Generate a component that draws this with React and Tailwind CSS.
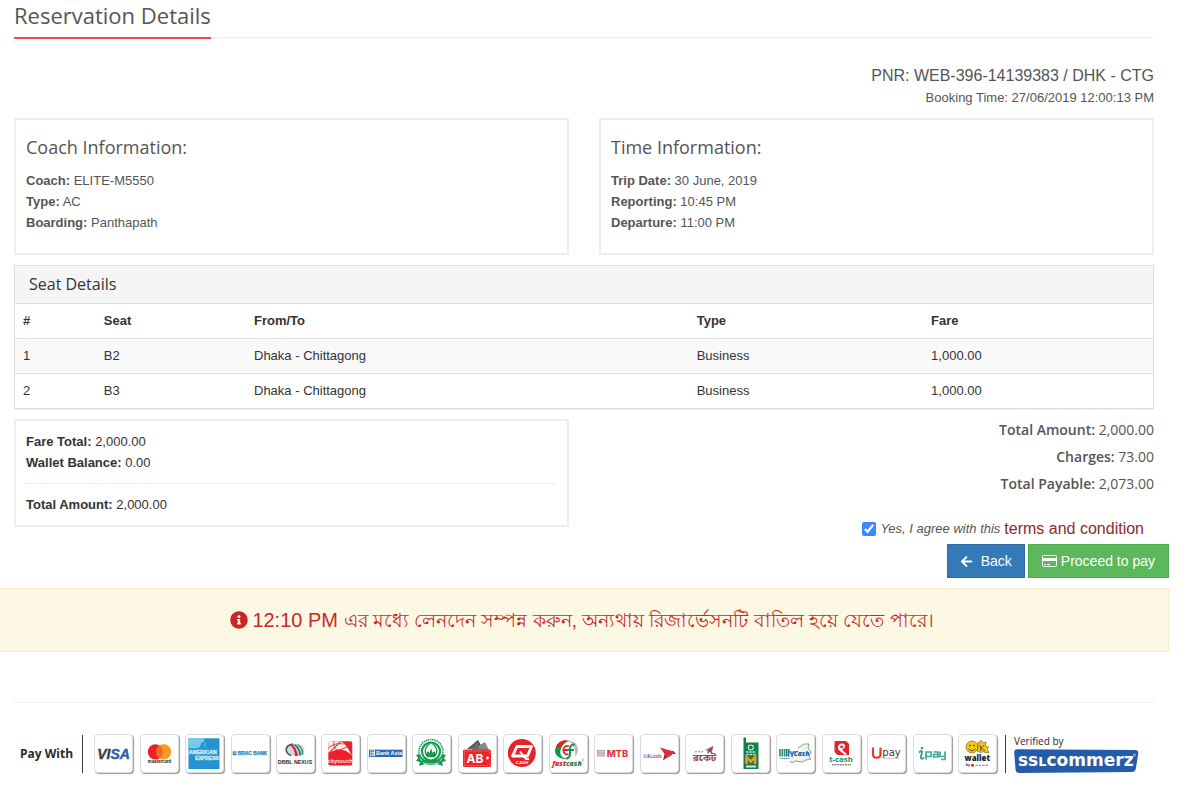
import React from "react";
import { FaArrowLeft, FaInfoCircle } from "react-icons/fa";

const seats = [
  { no: 1, seat: "B2", route: "Dhaka - Chittagong", type: "Business", fare: "1,000.00" },
  { no: 2, seat: "B3", route: "Dhaka - Chittagong", type: "Business", fare: "1,000.00" },
];

const SANS = "Liberation Sans, sans-serif";
const INTER = "Inter, sans-serif";
const OPEN = "Open Sans, sans-serif";
const DEJA = "DejaVu Sans, sans-serif";

function T({ x, y, s, f = SANS, w = 700, c = "#222", a = "middle", children, ...rest }) {
  return (
    <text x={x} y={y} fontSize={s} fontFamily={f} fontWeight={w} fill={c} textAnchor={a} {...rest}>
      {children}
    </text>
  );
}

const logos = [
  {
    name: "Visa",
    art: (
      <T x="19.5" y="24.5" s="14" c="#3d3d47" fontStyle="italic" strokeWidth=".4" stroke="#3d3d47">
        VI<tspan fill="#2a5caa" stroke="#2a5caa">SA</tspan>
      </T>
    ),
  },
  {
    name: "Mastercard",
    art: (
      <>
        <circle cx="15.4" cy="17.8" r="7.6" fill="#ec2127" />
        <circle cx="23.6" cy="17.8" r="7.6" fill="#f79a1f" />
        <path d="M19.5 11.4a7.6 7.6 0 0 1 0 12.8a7.6 7.6 0 0 1 0-12.8z" fill="#f26722" />
        <T x="19.5" y="29" s="4.2" f={INTER}>mastercard</T>
      </>
    ),
  },
  {
    name: "American Express",
    art: (
      <>
        <rect x="3.5" y="4.3" width="31" height="30.7" fill="#2393d1" />
        <path d="M3.5 4.3h17l-4 5-2 4-3 1h-8z" fill="#7cc8ec" />
        <path d="M18 7l3 2.500-2 2 2 2" fill="none" stroke="#7cc8ec" />
        <T x="17.800" y="19.800" s="5.200" c="#e3f3fb" stroke="#c2e4f5" strokeWidth=".4">AMERICAN</T>
        <T x="22" y="25.600" s="5" c="#e3f3fb" stroke="#c2e4f5" strokeWidth=".4">EXPRESS</T>
      </>
    ),
  },
  {
    name: "BRAC Bank",
    art: (
      <>
        <rect x="1.8" y="17.4" width="3.6" height="3.8" fill="#1c7fc4" />
        <rect x="2.8" y="18" width="2" height="2" fill="#f5a623" />
        <T x="21.500" y="21.200" s="4.900" c="#1b82c8" stroke="#1b82c8" strokeWidth=".25">BRAC BANK</T>
      </>
    ),
  },
  {
    name: "DBBL Nexus",
    art: (
      <>
        <ellipse cx="18.500" cy="16" rx="10" ry="6.200" fill="#d5d8da" />
        <path d="M17 10c-8 1-9 8-2 11.500" fill="none" stroke="#4a4f55" strokeWidth="1.400" />
        <path d="M13 10.500h3c4 3 5 7 6 11.500h-3c0-5-2-9-6-11.500z" fill="#d8232a" />
        <path d="M17 10.500h2.500c4 3 5 7 6 11h-2.500c0-5-2-8-6-11z" fill="#1f6fbd" />
        <path d="M20.500 10.500h2c3 2 5 6 5 9.500l-1.500 1c0-5-2-8-5.500-10.500z" fill="#2f9b57" />
        <T x="19" y="29.500" s="5.300" c="#2b2b2b">DBBL NEXUS</T>
      </>
    ),
  },
  {
    name: "citytouch",
    art: (
      <>
        <rect x="7.300" y="7.300" width="24" height="24.300" rx="2" fill="#ed2228" />
        <path d="M7.300 20.500L20 7.300c3 2 6 5 8.500 10 1 2 1.500 3 2.800 5-6-8-17-9-24-2z" fill="#fdeeee" />
        <path d="M7.300 7.300H19L7.300 19z" fill="#fdeeee" />
        <path d="M7.300 14c5-4 9-5 15-4M13 7.300c-1 4 0 7 4 9M20 7.300L7.300 20M26 13l-8 3" fill="none" stroke="#ed2228" strokeWidth=".9" />
        <T x="19.300" y="29" s="5.600" f={OPEN} w="600" c="#ffffff">citytouch</T>
      </>
    ),
  },
  {
    name: "Bank Asia",
    art: (
      <>
        <rect x="2" y="15.700" width="33.500" height="7.300" fill="#2b69b1" />
        <rect x="3" y="16.500" width="5" height="5.600" fill="#ffffff" />
        <path d="M4 17.500h3M4 19.300h3M4 21h3M4 17v4.500" stroke="#2b69b1" strokeWidth=".8" />
        <T x="22" y="21.400" s="5.400" c="#ffffff">Bank Asia</T>
      </>
    ),
  },
  {
    name: "Islami Bank",
    art: (
      <>
        <circle cx="19" cy="17.500" r="12" fill="none" stroke="#159a4d" strokeWidth="1.500" strokeDasharray="1.500 .7" />
        <circle cx="19" cy="17.500" r="9" fill="none" stroke="#159a4d" strokeWidth="2.200" />
        <path d="M19 8.500c-7 5-7 10-3.500 14h7c3.500-4 3.500-9-3.500-14z" fill="#ffffff" stroke="#159a4d" strokeWidth="1.300" />
        <path d="M14.500 22v-3l1.500-2 1.500 2 1.500-5 1.500 5 1.500-2 1.500 2v3z" fill="#159a4d" />
        <path d="M4 21l4-1c2 5 6 7 11 7s9-2 11-7l4 1-2 3 2 3-4 1 1 4-6-2c-4 1.500-8 1.500-12 0l-6 2 1-4-4-1 2-3z" fill="#159a4d" />
        <path d="M11 28.500c4 2 12 2 16 0M8 24l2 3M30 24l-2 3" fill="none" stroke="#c8ead6" strokeWidth=".9" />
      </>
    ),
  },
  {
    name: "AB Bank",
    art: (
      <>
        <path d="M9 15L20 6l5 9z" fill="#4c4c4e" />
        <path d="M13 16l14-8 4 8z" fill="#89898b" />
        <path d="M11 15l9-7 1 7z" fill="#6b6b6d" />
        <rect x="5" y="15.500" width="28" height="17.500" rx="1.500" fill="#ec2429" />
        <rect x="6.300" y="17" width="25.400" height="14.500" fill="none" stroke="#ffffff" strokeWidth=".4" strokeDasharray="1.200 1" />
        <T x="17" y="29" s="12" f={INTER} c="#ffffff">AB</T>
        <rect x="27" y="20.500" width="6" height="7" rx="1" fill="#ec2429" />
        <circle cx="29.500" cy="24" r="1.400" fill="#ffffff" />
      </>
    ),
  },
  {
    name: "Q-Cash",
    art: (
      <>
        <circle cx="18.800" cy="19" r="14" fill="#e8212a" />
        <path d="M14 12.500h14.500l-4 9.500H9.500z" fill="none" stroke="#ffffff" strokeWidth="2.800" strokeLinejoin="round" />
        <path d="M17 17.500l6 7.500h3" fill="none" stroke="#ffffff" strokeWidth="2" />
        <T x="19" y="29.500" s="4.400" c="#ffffff" fontStyle="italic">CASH</T>
      </>
    ),
  },
  {
    name: "FastCash",
    art: (
      <>
        <path d="M19 7.300c-12-1-17 11-9 16 4 2.500 8 1.500 8 1.500-6-1-8-5-6-10 1.500-4 4-6 7-7.500z" fill="#17944b" />
        <path d="M20 7c8 0 12 9 6 16 1-8-1-12-6-16z" fill="#b7b7b9" />
        <path d="M7 13c2-6 8-8 14-6-5 0-8 3-9 6z" fill="#e2231a" />
        <path d="M20 12c-4-1-6 2-5.500 5s3 4 5 3M15 16h4" fill="none" stroke="#e2231a" strokeWidth="1.800" />
        <path d="M26 10.500c-4-.5-5 2-5 5v5c0 2-2 4-4 4M19 16h6" fill="none" stroke="#17944b" strokeWidth="2" />
        <T x="18" y="32" s="7" f={OPEN} w="800" c="#d4232b" fontStyle="italic">
          fast<tspan fill="#17844b">cash</tspan>
        </T>
        <circle cx="34" cy="26" r="1.100" fill="none" stroke="#777" strokeWidth=".4" />
      </>
    ),
  },
  {
    name: "MTB",
    art: (
      <>
        <rect x="3.500" y="16.500" width="7" height="5.500" fill="#f3e3e3" stroke="#8a7f80" strokeWidth=".6" />
        <path d="M5 17v5M7 17v5M9 17v5M3.500 19.300h7" stroke="#b7686a" strokeWidth=".5" />
        <T x="23.500" y="22.500" s="9.500" f={INTER} w="800" c="#e23a35">MTB</T>
      </>
    ),
  },
  {
    name: "bKash",
    art: (
      <>
        <T x="12.500" y="23.800" s="7" w="400" c="#3c3c3c" f="Liberation Serif, serif">
          <tspan fill="#d8232e">b</tspan>Kash
        </T>
        <path d="M20 13.500l10 3-3 7z" fill="#d9303c" />
        <path d="M22 13.500l5 10-4 3 2-8z" fill="#a9202c" />
        <path d="M26 24.500l3-8 5 .5-2 4z" fill="#d9303c" />
        <path d="M33 17l3 3h-3z" fill="#a9202c" />
      </>
    ),
  },
  {
    name: "Rocket",
    art: (
      <>
        <path d="M20 16l8.500-4-2 7.500-2-2.500z" fill="#a35573" />
        <path d="M28.500 12l-6 5.500v2.500l2-2z" fill="#8c3a5c" />
        <T x="19.500" y="26.500" s="10" f="Noto Sans Bengali, sans-serif" c="#94476a">রকেট</T>
        <path d="M10 17.800h9" stroke="#a35573" strokeWidth=".9" strokeDasharray="2 1" />
      </>
    ),
  },
  {
    name: "Islami Bank mCash",
    art: (
      <>
        <path d="M12.500 3.500h2.500v5h12.500v26.500h-15z" fill="#12804a" />
        <circle cx="19.800" cy="13.500" r="2.500" fill="none" stroke="#d8efe2" strokeWidth="1.100" />
        <path d="M15 18h10M15.500 20.500h9" stroke="#b9dfca" strokeWidth="1.300" strokeDasharray="2.500 .7" />
        <path d="M15.500 30v-7l4.300 4.500 4.300-4.500v7" fill="none" stroke="#f59b23" strokeWidth="2.500" />
        <rect x="15" y="31.500" width="10" height="2" fill="#cfe9da" />
      </>
    ),
  },
  {
    name: "MYCash",
    art: (
      <>
        <path d="M22 14l6-4h5l-1 4 3 4-2 4 2 3-5 1-4 2-7-1-3 2-2-2" fill="#eef7ef" stroke="#4c9c63" strokeWidth=".8" />
        <path d="M4 22.500v-7.500M6.300 22.500v-7.500M8.600 22.500v-7.500" stroke="#2f9b57" strokeWidth="1.700" />
        <path d="M10.700 22.500v-7.500M12.700 22.500v-7.500" stroke="#2b62ad" strokeWidth="1.500" />
        <T x="16" y="22.500" s="9.500" f={OPEN} w="800" c="#1f7fbf">Y</T>
        <T x="25.500" y="22.300" s="6.600" f={OPEN} w="800" c="#2459a6" fontStyle="italic">Cash</T>
        <path d="M4 24.500h10" stroke="#2b62ad" strokeWidth=".8" strokeDasharray="1.500 .5" />
      </>
    ),
  },
  {
    name: "t-cash",
    art: (
      <>
        <path d="M13 7h11l3 3v11H15.500l-3-3V9z" fill="#e6232b" />
        <path d="M16 12c2-4 8-3 7 1l-3 3 5 4-2 1-5-4c-2-1-2-3-2-5z" fill="#ffffff" />
        <path d="M18 12.500c1-2 4-1 3 1l-2 1z" fill="#e6232b" />
        <T x="19" y="28" s="7.800" f={OPEN} w="700" c="#159052">t-cash</T>
        <path d="M10 30.800h19" stroke="#555" strokeWidth="1" strokeDasharray="2 .6" />
      </>
    ),
  },
  {
    name: "Upay",
    art: (
      <>
        <path d="M6 13.500v6.500c0 5 7.500 5 7.500 0v-6.500" fill="none" stroke="#e6392f" strokeWidth="2.200" />
        <T x="24.500" y="21.500" s="10" f={DEJA} w="400" c="#3a3a3c">pay</T>
        <path d="M16 24.300h16" stroke="#e8a39c" strokeWidth=".9" strokeDasharray="1.800 .6" />
      </>
    ),
  },
  {
    name: "iPay",
    art: (
      <>
        <circle cx="9" cy="14" r="1.300" fill="#2f9f93" />
        <path d="M6 18.500c2-2 3.500-2 3 0l-1.200 4.500c0 2 1.500 2.500 3 .5" fill="none" stroke="#2f9f93" strokeWidth="1.800" />
        <path d="M13 25.500v-7.500h5v4.500h-4.500M20.500 18h4.500v5h-4.500v-2.500h4.500M27 17.500v5h5M32 17.500v8h-4" fill="none" stroke="#3fa89b" strokeWidth="1.700" />
      </>
    ),
  },
  {
    name: "OK Wallet",
    art: (
      <>
        <circle cx="14" cy="13" r="6" fill="#f7c619" stroke="#4a3a10" strokeWidth=".5" />
        <circle cx="12" cy="11.500" r=".8" fill="#222" />
        <circle cx="16" cy="11.500" r=".8" fill="#222" />
        <path d="M10.500 14.500c2 3 5 3 7 0" fill="none" stroke="#222" strokeWidth=".8" />
        <path d="M20 8l1.500 1 1.500-3 2 3 3-1-1 4 3.500 1-1.500 2 2 3.500h-4l-2-1-1.500 1-4-1z" fill="#f7c619" stroke="#4a3a10" strokeWidth=".5" />
        <path d="M22 11l1 6M26 11.500l-3 2.500 4 3" fill="none" stroke="#4a3a10" strokeWidth=".8" />
        <T x="19.300" y="27" s="7.800" f={OPEN} w="800" c="#1f1f21">wallet</T>
        <T x="10" y="32.300" s="3.800">by</T>
        <circle cx="14.500" cy="31.300" r="1.500" fill="#e2232b" />
        <path d="M17.500 31.300h13" stroke="#999" strokeWidth="1.200" strokeDasharray="2.500 .8" />
      </>
    ),
  },
];

function Info({ label, value }) {
  return (
    <p className="text-[13px] leading-[21px]">
      <strong>{label}:</strong> {value}
    </p>
  );
}

function InfoCard({ title, rows }) {
  return (
    <section className="border-2 border-[#eeeeee] px-2.5 pt-[17px] pb-5">
      <h2 className="mb-[13px] font-['Open_Sans',sans-serif] text-lg leading-5">{title}</h2>
      {rows.map(([label, value]) => (
        <Info key={label} label={label} value={value} />
      ))}
    </section>
  );
}

function CreditCardIcon() {
  return (
    <svg viewBox="0 0 15 12" className="h-3 w-[15px]" aria-hidden="true">
      <rect x=".5" y=".5" width="14" height="11" rx="1" fill="none" stroke="currentColor" />
      <path d="M.5 3h14v3H.5z" fill="currentColor" />
      <path d="M2 9.500h2M5 9.500h3" stroke="currentColor" />
    </svg>
  );
}

export default function App() {
  return (
    <main className="bg-white pr-[26px] pb-7 pl-3.5 font-['Liberation_Sans',Arial,sans-serif] text-[13px] text-[#555555]">
      <header className="flex border-b border-dotted border-[#e0e0e0]">
        <h1 className="-mb-0.5 border-b-2 border-[#eb4d40] pb-[7px] font-['Open_Sans',sans-serif] text-[22px] leading-[30px]">
          Reservation Details
        </h1>
      </header>

      <div className="mt-[26px] mb-2.5 text-right">
        <p className="text-base leading-6">PNR: WEB-396-14139383 / DHK - CTG</p>
        <p className="text-[13px] leading-5">Booking Time: 27/06/2019 12:00:13 PM</p>
      </div>

      <div className="grid grid-cols-2 gap-[30px]">
        <InfoCard
          title="Coach Information:"
          rows={[
            ["Coach", "ELITE-M5550"],
            ["Type", "AC"],
            ["Boarding", "Panthapath"],
          ]}
        />
        <InfoCard
          title="Time Information:"
          rows={[
            ["Trip Date", "30 June, 2019"],
            ["Reporting", "10:45 PM"],
            ["Departure", "11:00 PM"],
          ]}
        />
      </div>

      <section className="mt-2.5 border border-[#dddddd] text-[#333333] shadow-[0_1px_1px_rgba(0,0,0,0.05)]">
        <h2 className="border-b border-[#dddddd] bg-[#f5f5f5] px-3.5 py-2 font-['Open_Sans',sans-serif] text-base leading-[21px]">
          Seat Details
        </h2>
        <table className="w-full table-fixed border-separate border-spacing-0 text-left text-[13px] leading-[18px]">
          <colgroup>
            <col className="w-[7.1%]" />
            <col className="w-[13.2%]" />
            <col className="w-[38.9%]" />
            <col className="w-[20.6%]" />
            <col />
          </colgroup>
          <thead>
            <tr>
              {["#", "Seat", "From/To", "Type", "Fare"].map((h) => (
                <th key={h} scope="col" className="p-2 font-bold">
                  {h}
                </th>
              ))}
            </tr>
          </thead>
          <tbody>
            {seats.map((s) => (
              <tr key={s.no} className="odd:bg-[#f9f9f9]">
                {[s.no, s.seat, s.route, s.type, s.fare].map((v, i) => (
                  <td key={i} className="border-t border-[#dddddd] p-2">
                    {v}
                  </td>
                ))}
              </tr>
            ))}
          </tbody>
        </table>
      </section>

      <div className="mt-[7px] grid grid-cols-2 items-start gap-[30px]">
        <section className="mt-[3px] border-2 border-[#eeeeee] p-2.5 text-[#333333]">
          <Info label="Fare Total" value="2,000.00" />
          <Info label="Wallet Balance" value="0.00" />
          <hr className="my-2.5 border-[#eeeeee]" />
          <Info label="Total Amount" value="2,000.00" />
        </section>
        <div className="text-right">
          <div className="font-['Open_Sans',sans-serif] text-sm leading-[27px]">
            <p><span className="font-semibold">Total Amount:</span> 2,000.00</p>
            <p><span className="font-semibold">Charges:</span> 73.00</p>
            <p><span className="font-semibold">Total Payable:</span> 2,073.00</p>
          </div>
          <div className="mt-[22px] flex items-center justify-end pr-2.5 leading-5">
            <input id="agree" type="checkbox" defaultChecked className="mr-1 h-3.5 w-3.5 accent-[#3b88fd]" />
            <label htmlFor="agree" className="mr-1 italic">Yes, I agree with this</label>
            <a href="#terms" className="text-base leading-5 text-[#8f2a28]">terms and condition</a>
          </div>
        </div>
      </div>

      <div className="-mr-[15px] mt-[5px] flex justify-end gap-[3px] text-sm leading-5 text-white">
        <button type="button" className="flex items-center gap-2 border border-[#2e6da4] bg-[#337ab7] px-3 py-1.5">
          <FaArrowLeft className="h-[13px] w-[13px]" aria-hidden="true" />
          Back
        </button>
        <button type="button" className="flex items-center gap-1 border border-[#4cae4c] bg-[#5cb85c] px-[13px] py-1.5">
          <CreditCardIcon />
          Proceed to pay
        </button>
      </div>

      <p
        role="alert"
        className="-mr-[15px] -ml-3.5 mt-2.5 flex items-center justify-center gap-1 border border-l-0 border-[#faebcc] bg-[#fcf8e3] py-[17px] pr-5 pl-4 text-xl leading-7 text-[#c9282a]"
      >
        <FaInfoCircle className="h-[18px] w-[18px] shrink-0" aria-hidden="true" />
        <span>
          12:10 PM{" "}
          <span lang="bn" className="text-[19px] leading-5">
            এর মধ্যে লেনদেন সম্পন্ন করুন, অন্যথায় রিজার্ভেসনটি বাতিল হয়ে যেতে পারে।
          </span>
        </span>
      </p>

      <footer className="mt-[50px] flex items-center border-t border-[#eeeeee] pt-[31px] pr-[15px] pl-1.5">
        <strong className="mr-[9px] font-['Open_Sans',sans-serif] text-xs text-[#2b2b2b]">Pay With</strong>
        <span className="mr-[11px] h-[38px] w-px bg-[#3a3a44]" />
        <ul className="flex flex-1 justify-between">
          {logos.map((logo) => (
            <li
              key={logo.name}
              className="h-[39px] w-[39px] rounded border border-[#dcdcdc] bg-white shadow-[1px_1px_1px_rgba(0,0,0,0.4)]"
            >
              <svg viewBox="1 1 37 37" className="h-full w-full" role="img" aria-label={logo.name}>
                {logo.art}
              </svg>
            </li>
          ))}
        </ul>
        <span className="mr-2 ml-2 h-[38px] w-px bg-[#3a3a44]" />
        <div>
          <p className="font-['Open_Sans',sans-serif] text-[10px] leading-3 text-[#2b2b2b]">Verified by</p>
          <svg viewBox="0 0 125 24" className="mt-0.5 h-6 w-[125px]" role="img" aria-label="SSLCommerz">
            <path d="M3 .3L121 1q3.500 0 3.300 3L122 19q-.7 4-4 4.100L5 23.900q-3 0-3.400-3L.2 3.300Q.2.600 3 .3z" fill="#255ca9" />
            <text x="4" y="17" fontFamily={DEJA} fontWeight="700" fontSize="17" fill="#ffffff">
              ss<tspan fontSize="13">L</tspan>commerz
            </text>
            <circle cx="120.500" cy="6" r="1" fill="none" stroke="#ffffff" strokeWidth=".5" />
          </svg>
        </div>
      </footer>
    </main>
  );
}
